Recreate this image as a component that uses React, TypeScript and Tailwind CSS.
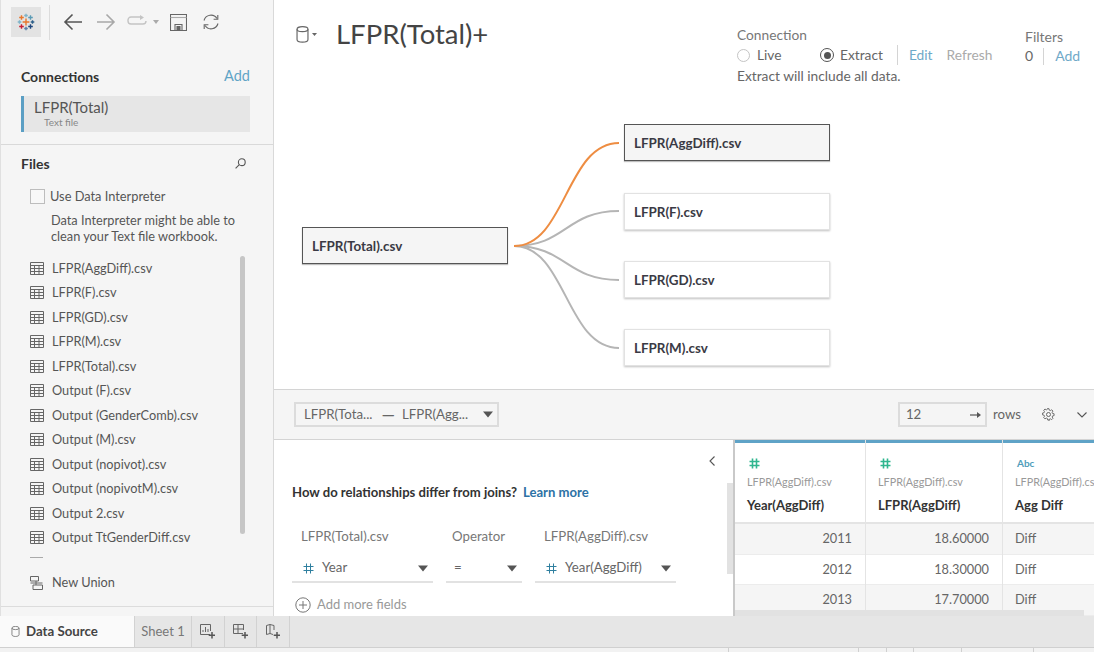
import React from "react";

const font = { fontFamily: 'Lato, "Open Sans", sans-serif' };

const files = [
  "LFPR(AggDiff).csv",
  "LFPR(F).csv",
  "LFPR(GD).csv",
  "LFPR(M).csv",
  "LFPR(Total).csv",
  "Output (F).csv",
  "Output (GenderComb).csv",
  "Output (M).csv",
  "Output (nopivot).csv",
  "Output (nopivotM).csv",
  "Output 2.csv",
  "Output TtGenderDiff.csv",
];

function Caret({ className = "" }: { className?: string }) {
  return (
    <svg width="10" height="7" viewBox="0 0 10 7" className={className}>
      <path d="M0 0.5h10L5 6.5z" fill="#555" />
    </svg>
  );
}

function Hash({ color = "#2f7f9f", size = 11, w = 1 }: { color?: string; size?: number; w?: number }) {
  return (
    <svg width={size} height={size} viewBox="0 0 11 11" fill="none" stroke={color} strokeWidth={w}>
      <path d="M3.5 0.5v10M7.5 0.5v10M0.5 3.5h10M0.5 7.5h10" />
    </svg>
  );
}

function TableIcon() {
  return (
    <svg width="14" height="13" viewBox="0 0 14 13" fill="none" stroke="#666" strokeWidth="1">
      <path d="M0.5 0.5h13v12h-13z" />
      <path d="M0.5 3.5h13M0.5 6.5h13M0.5 9.5h13M4.5 3.5v9M9 3.5v9" />
    </svg>
  );
}

function Logo() {
  const plus = (x: number, y: number, s: number, c: string, key: number) => (
    <path key={key} d={`M${x - s} ${y}h${2 * s}M${x} ${y - s}v${2 * s}`} stroke={c} strokeWidth="1.4" />
  );
  return (
    <svg width="18" height="18" viewBox="0 0 18 18" fill="none">
      {plus(9, 9, 3.4, "#e8762c", 0)}
      {plus(9, 2.5, 1.8, "#7fb4c9", 1)}
      {plus(9, 15.5, 1.8, "#5b7fa8", 2)}
      {plus(2.5, 9, 1.8, "#7fb4c9", 3)}
      {plus(15.5, 9, 1.8, "#2c5f8a", 4)}
      {plus(4.5, 4.5, 2.3, "#e8762c", 5)}
      {plus(13.5, 4.5, 2.3, "#5b9bb5", 6)}
      {plus(4.5, 13.5, 2.3, "#c72037", 7)}
      {plus(13.5, 13.5, 2.3, "#1f477d", 8)}
    </svg>
  );
}

function Cylinder({ w = 10, h = 13, color = "#666" }: { w?: number; h?: number; color?: string }) {
  return (
    <svg width={w} height={h} viewBox="0 0 10 13" fill="none" stroke={color} strokeWidth="0.9">
      <ellipse cx="5" cy="2.4" rx="4.2" ry="1.9" />
      <path d="M0.8 2.4v8c0 1.1 1.9 2 4.2 2s4.2-.9 4.2-2v-8" />
    </svg>
  );
}

function Toolbar() {
  return (
    <div className="flex h-[44px] items-center pl-[10px]">
      <div className="flex h-[30px] w-[30px] items-center justify-center bg-[#e3e3e3]">
        <Logo />
      </div>
      <div className="ml-[8px] h-[35px] w-px bg-[#dcdcdc]" />
      <svg className="ml-[13px]" width="20" height="18" viewBox="0 0 20 18" fill="none" stroke="#555" strokeWidth="1.6">
        <path d="M19 9H2M9.5 1.5 2 9l7.5 7.5" />
      </svg>
      <svg className="ml-[13px]" width="20" height="18" viewBox="0 0 20 18" fill="none" stroke="#a8a8a8" strokeWidth="1.6">
        <path d="M1 9h17M10.5 1.5 18 9l-7.5 7.5" />
      </svg>
      <svg className="ml-[11px]" width="20" height="14" viewBox="0 0 20 14" fill="none" stroke="#c4c4c4" strokeWidth="1.4">
        <path d="M13 2H4a3 3 0 0 0-3 3v1a3 3 0 0 0 3 3h12a3 3 0 0 0 3-3" />
        <path d="M13 0v5l4-2.5z" fill="#c4c4c4" stroke="none" />
      </svg>
      <svg className="ml-[6px]" width="6" height="4" viewBox="0 0 6 4">
        <path d="M0 0h6L3 4z" fill="#aaa" />
      </svg>
      <svg className="ml-[11px]" width="17" height="17" viewBox="0 0 17 17" fill="none" stroke="#666" strokeWidth="1.1">
        <path d="M0.5 0.5h16v16h-16z" />
        <path d="M0.5 3.5h16" stroke="#aaa" />
        <path d="M5 16.5v-6h7v6" />
        <path d="M7 12.5h3v3H7z" fill="#666" />
      </svg>
      <svg className="ml-[15px]" width="18" height="18" viewBox="0 0 18 18" fill="none" stroke="#666" strokeWidth="1.1">
        <path d="M2 7.5A7.2 7.2 0 0 1 15 5.5" />
        <path d="M16 10.5A7.2 7.2 0 0 1 3 12.5" />
        <path d="M15.8 2v4.2h-4.2" />
        <path d="M2.2 16v-4.2h4.2" />
      </svg>
    </div>
  );
}

function Sidebar() {
  return (
    <aside className="relative flex w-[274px] shrink-0 flex-col border-r border-r-[#d9d9d9] border-l border-l-[#e0e0e0] bg-[#f5f5f5]">
      <Toolbar />
      <div className="mt-[20px] flex h-[24px] items-center justify-between pl-[20px] pr-[23px]">
        <span className="text-[14px] font-bold text-[#333]">Connections</span>
        <span className="text-[14.5px] text-[#5fa4c6]">Add</span>
      </div>
      <div className="ml-[20px] mt-[8px] flex h-[36px] w-[229px] flex-col border-l-[3px] border-l-[#5b9fc4] bg-[#e6e6e6] pl-[10px]">
        <span className="mt-[2px] text-[15px] leading-[18px] text-[#555]">LFPR(Total)</span>
        <span className="pl-[10px] text-[10px] leading-[12px] text-[#888]">Text file</span>
      </div>
      <div className="mt-[12px] h-px bg-[#d9d9d9]" />
      <div className="mt-[6px] flex h-[24px] items-center justify-between pl-[20px] pr-[27px]">
        <span className="text-[14px] font-bold text-[#333]">Files</span>
        <svg width="11" height="11" viewBox="0 0 11 11" fill="none" stroke="#555" strokeWidth="1.1">
          <circle cx="6.8" cy="4.2" r="3.4" />
          <path d="M4.3 6.7.6 10.4" />
        </svg>
      </div>
      <div className="mt-[13px] flex items-center pl-[29px]">
        <span className="h-[15px] w-[15px] border border-[#bdbdbd] bg-[#f8f8f8]" />
        <span className="ml-[5px] text-[12.8px] leading-[16px] text-[#555]">Use Data Interpreter</span>
      </div>
      <p className="mt-[8px] pl-[50px] text-[12.75px] leading-[16px] text-[#555]">
        Data Interpreter might be able to
        <br />
        clean your Text file workbook.
      </p>
      <div className="mt-[12px] flex flex-col pl-[29px]">
        {files.map((f) => (
          <div key={f} className="flex h-[24.5px] items-center gap-[8px] text-[12.75px] text-[#555]">
            <TableIcon />
            <span>{f}</span>
          </div>
        ))}
        <div className="mt-[7px] h-px w-[13px] bg-[#aaa]" />
        <div className="mt-[15px] flex h-[20px] items-center gap-[8px] text-[12.75px] text-[#555]">
          <svg width="14" height="14" viewBox="0 0 14 14" fill="none" stroke="#666" strokeWidth="1">
            <path d="M0.5 0.5h8v4.5h-8zM3 9h9.5v4.5H3zM6 5v4M.5 7h12" />
          </svg>
          <span>New Union</span>
        </div>
      </div>
      <div className="mt-[13px] h-px bg-[#dcdcdc]" />
      <div className="absolute left-[239px] top-[256px] h-[278px] w-[5px] rounded-full bg-[#c6c6c6]" />
    </aside>
  );
}

function Node({ label, x, y, w = 206, active = false }: { label: string; x: number; y: number; w?: number; active?: boolean }) {
  return (
    <div
      className={`absolute flex h-[37px] items-center pl-[9px] pt-[1px] text-[13.4px] font-bold text-[#3a3a44] ${
        active
          ? "border-[1.5px] border-[#555] bg-[#f5f5f5] shadow-[0_1px_1px_rgba(0,0,0,0.25)]"
          : "border border-[#e2e2e2] bg-white shadow-[0_1px_2px_rgba(0,0,0,0.25)]"
      }`}
      style={{ left: x, top: y, width: w }}
    >
      {label}
    </div>
  );
}

function Canvas() {
  const curve = (y: number) => `M240 246C292 246 292 ${y} 345 ${y}`;
  return (
    <div className="relative h-[390px] border-b border-b-[#d4d4d4] bg-white">
      <div className="absolute left-[22px] top-[20px] flex items-center">
        <Cylinder w={13} h={17} />
        <svg className="ml-[3px]" width="5" height="3" viewBox="0 0 5 3">
          <path d="M0 0h5L2.5 3z" fill="#666" />
        </svg>
        <span className="ml-[19px] text-[27.5px] leading-[28px] text-[#444]">LFPR(Total)+</span>
      </div>
      <div className="absolute left-[463px] top-[25px] text-[13.75px] leading-[20px] text-[#666]">
        <div className="text-[#777]">Connection</div>
        <div className="flex h-[20px] items-center">
          <span className="h-[13px] w-[13px] rounded-full border border-[#c4c4c4] bg-white" />
          <span className="ml-[7px] w-[63px]">Live</span>
          <span className="flex h-[14px] w-[14px] items-center justify-center rounded-full border border-[#555]">
            <span className="h-[7px] w-[7px] rounded-full bg-[#555]" />
          </span>
          <span className="ml-[6px]">Extract</span>
          <span className="ml-[14px] h-[20px] w-px bg-[#d4d4d4]" />
          <span className="ml-[11px] text-[#6fa9c8]">Edit</span>
          <span className="ml-[14px] text-[#aaa]">Refresh</span>
        </div>
        <div className="mt-[1px]">Extract will include all data.</div>
      </div>
      <div className="absolute left-[751px] top-[27px] text-[14px] leading-[20px] text-[#777]">
        <div>Filters</div>
        <div className="mt-[-1px] flex h-[20px] items-center">
          <span className="text-[#666]">0</span>
          <span className="ml-[10px] h-[17px] w-px bg-[#d4d4d4]" />
          <span className="ml-[11px] text-[#6fa9c8]">Add</span>
        </div>
      </div>
      <svg className="absolute left-0 top-0" width="820" height="390" fill="none" strokeWidth="2">
        <path d={curve(211)} stroke="#b5b5b5" />
        <path d={curve(280)} stroke="#b5b5b5" />
        <path d={curve(348)} stroke="#b5b5b5" />
        <path d={curve(143)} stroke="#ee8d42" />
      </svg>
      <Node label="LFPR(Total).csv" x={28} y={227} active />
      <Node label="LFPR(AggDiff).csv" x={350} y={124} active />
      <Node label="LFPR(F).csv" x={350} y={193} />
      <Node label="LFPR(GD).csv" x={350} y={261} />
      <Node label="LFPR(M).csv" x={350} y={329} />
    </div>
  );
}

function PreviewBar() {
  return (
    <div className="flex h-[50px] items-center border-b border-b-[#d4d4d4] bg-[#f5f5f5] pl-[20px] pr-[7px] text-[13.25px] text-[#666]">
      <div className="flex h-[25px] w-[205px] items-center border-2 border-[#dcdcdc] pl-[8px] pr-[4px]">
        <span>LFPR(Tota...</span>
        <span className="ml-[9px] text-[17px] leading-[17px]">—</span>
        <span className="ml-[7px]">LFPR(Agg...</span>
        <Caret className="ml-auto" />
      </div>
      <div className="ml-auto flex h-[25px] w-[89px] items-center justify-between border-2 border-[#dcdcdc] pl-[6px] pr-[4px]">
        <span>12</span>
        <svg width="11" height="8" viewBox="0 0 11 8">
          <path d="M0 4h8" stroke="#555" strokeWidth="1.2" />
          <path d="M7 1l4 3-4 3z" fill="#555" />
        </svg>
      </div>
      <span className="ml-[6px]">rows</span>
      <svg className="ml-[21px]" width="13" height="13" viewBox="0 0 13 13" fill="none" stroke="#666" strokeWidth="1">
        <circle cx="6.5" cy="6.5" r="2" />
        <path d="M5.5 .7h2l.3 1.6 1.2.5 1.4-.9 1.4 1.4-.9 1.4.5 1.2 1.6.3v2l-1.6.3-.5 1.2.9 1.4-1.4 1.4-1.4-.9-1.2.5-.3 1.6" transform="scale(.93)" />
        <path d="M7.5 12.3h-2l-.3-1.6-1.2-.5-1.4.9-1.4-1.4.9-1.4-.5-1.2-1.6-.3v-2l1.6-.3.5-1.2-.9-1.4 1.4-1.4 1.4.9 1.2-.5" transform="scale(.93) translate(.6 .6)" />
      </svg>
      <svg className="ml-[22px]" width="10" height="6" viewBox="0 0 10 6" fill="none" stroke="#555" strokeWidth="1.1">
        <path d="M.5.5 5 5 9.5.5" />
      </svg>
    </div>
  );
}

function RelationPanel() {
  return (
    <div className="relative w-[459px] shrink-0 overflow-hidden bg-white pl-[18px] text-[13.25px] text-[#666]">
      <svg className="absolute left-[435px] top-[16px]" width="6" height="10" viewBox="0 0 6 10" fill="none" stroke="#555" strokeWidth="1.1">
        <path d="M5.5.5 1 5l4.5 4.5" />
      </svg>
      <div className="absolute left-[453px] top-[43px] h-[91px] w-[6px] bg-[#e2e2e2]" />
      <div className="mt-[43px] flex h-[20px] items-center text-[13.1px] font-bold text-[#333]">
        How do relationships differ from joins?
        <span className="ml-[6px] text-[#2d72a5]">Learn more</span>
      </div>
      <div className="mt-[24px] flex h-[20px] items-center text-[#777]">
        <span className="ml-[9px] w-[151px]">LFPR(Total).csv</span>
        <span className="w-[92px]">Operator</span>
        <span>LFPR(AggDiff).csv</span>
      </div>
      <div className="mt-[8px] flex">
        <div className="flex h-[28px] w-[141px] items-center border-b-2 border-b-[#e2e2e2] pl-[11px] pr-[5px]">
          <Hash />
          <span className="ml-[8px]">Year</span>
          <Caret className="ml-auto" />
        </div>
        <div className="ml-[13px] flex h-[28px] w-[76px] items-center border-b-2 border-b-[#e2e2e2] pl-[8px] pr-[5px]">
          <span>=</span>
          <Caret className="ml-auto" />
        </div>
        <div className="ml-[13px] flex h-[28px] w-[141px] items-center border-b-2 border-b-[#e2e2e2] pl-[11px] pr-[5px]">
          <Hash />
          <span className="ml-[8px]">Year(AggDiff)</span>
          <Caret className="ml-auto" />
        </div>
      </div>
      <div className="mt-[12px] flex items-center pl-[3px] text-[13px] text-[#999]">
        <svg width="16" height="16" viewBox="0 0 16 16" fill="none" stroke="#777" strokeWidth="1">
          <circle cx="8" cy="8" r="7.2" />
          <path d="M8 4v8M4 8h8" />
        </svg>
        <span className="ml-[6px]">Add more fields</span>
      </div>
    </div>
  );
}

function DataColumn({
  w,
  icon,
  name,
  rows,
  align = "right",
}: {
  w: number;
  icon: React.ReactNode;
  name: string;
  rows: string[];
  align?: "right" | "left";
}) {
  return (
    <div className="flex shrink-0 flex-col border-r border-r-[#e4e4e4]" style={{ width: w }}>
      <div className="h-[3px] bg-[#5fa3c7]" />
      <div className="flex h-[81px] flex-col border-b-2 border-b-[#e4e4e4] bg-white pl-[12px]">
        <div className="mt-[13px] flex h-[14px] items-center pl-[2px]">{icon}</div>
        <div className="mt-[5px] whitespace-nowrap text-[10.8px] leading-[14px] text-[#999]">LFPR(AggDiff).csv</div>
        <div className="mt-[7px] whitespace-nowrap text-[13px] font-bold leading-[18px] text-[#333]">{name}</div>
      </div>
      {rows.map((r, i) => (
        <div
          key={r + i}
          className={`flex h-[30.6px] shrink-0 items-center border-b border-b-[#ececec] text-[12.75px] text-[#666] ${
            i % 2 === 0 ? "bg-[#f5f5f5]" : "bg-white"
          } ${align === "right" ? "justify-end pr-[13px]" : "pl-[12px]"}`}
        >
          {r}
        </div>
      ))}
    </div>
  );
}

function DataGrid() {
  return (
    <div className="relative flex flex-1 overflow-hidden border-l-2 border-l-[#c9c9c9] bg-white">
      <DataColumn w={131} icon={<Hash color="#2fb68f" size={11} w={1.6} />} name="Year(AggDiff)" rows={["2011", "2012", "2013"]} />
      <DataColumn w={137} icon={<Hash color="#2fb68f" size={11} w={1.6} />} name="LFPR(AggDiff)" rows={["18.60000", "18.30000", "17.70000"]} />
      <DataColumn
        w={110}
        icon={<span className="text-[10px] font-bold leading-[14px] text-[#4f9dbb]">Abc</span>}
        name="Agg Diff"
        rows={["Diff", "Diff", "Diff"]}
        align="left"
      />
      <div className="absolute bottom-0 left-0 h-[6px] w-[349px] bg-[#e2e2e2]" />
    </div>
  );
}

function Tabs() {
  return (
    <div className="h-[32px] border-b border-b-[#d0d0d0] bg-[#e6e6e6]">
      <div className="flex h-full items-stretch">
        <div className="flex w-[135px] items-center border-r border-r-[#d2d2d2] bg-[#fafafa] pl-[11px] text-[13.25px] font-bold text-[#444]">
          <Cylinder w={9} h={11} />
          <span className="ml-[6px]">Data Source</span>
        </div>
        <div className="flex w-[57px] items-center justify-center border-r border-r-[#d2d2d2] text-[13px] text-[#777]">Sheet 1</div>
        {[0, 1, 2].map((k) => (
          <div key={k} className="flex w-[32.5px] items-center justify-center border-r border-r-[#d2d2d2]">
            <svg width="15" height="15" viewBox="0 0 15 15" fill="none" stroke="#666" strokeWidth="1">
              {k === 0 && <path d="M10 10.5H.5v-10h10V7M3 8V6M5.5 8V3M8 8V5" />}
              {k === 1 && <path d="M10 9.5H.5v-9h10V6M.5 5h10M5 .5v9" />}
              {k === 2 && <path d="M8 10.5 5 9.5 1.5 10.5V1.5L5 .5l4 1V6M5 .5v9" />}
              <path d="M12 8v6.5M8.7 11.2h6.5" stroke="#555" strokeWidth="1.5" />
            </svg>
          </div>
        ))}
      </div>
    </div>
  );
}

function StatusStrip() {
  return (
    <div className="flex min-h-0 flex-1 bg-[#f2f2f2]">
      <div className="w-[729px] border-r border-r-[#d0d0d0]" />
      <div className="w-[130px] border-r border-r-[#d0d0d0]" />
      <div className="w-[28px] border-r border-r-[#d0d0d0]" />
      <div className="w-[27px] border-r border-r-[#d0d0d0]" />
      <div className="w-[48px] border-r border-r-[#d0d0d0]" />
      <div className="w-[72px] border-r border-r-[#d0d0d0]" />
    </div>
  );
}

export default function App() {
  return (
    <div className="flex h-[652px] w-[1094px] flex-col overflow-hidden bg-[#f0f0f0]" style={font}>
      <div className="flex h-[616px] shrink-0">
        <Sidebar />
        <div className="flex min-w-0 flex-1 flex-col">
          <Canvas />
          <PreviewBar />
          <div className="flex min-h-0 flex-1 overflow-hidden">
            <RelationPanel />
            <DataGrid />
          </div>
        </div>
      </div>
      <Tabs />
      <StatusStrip />
    </div>
  );
}
